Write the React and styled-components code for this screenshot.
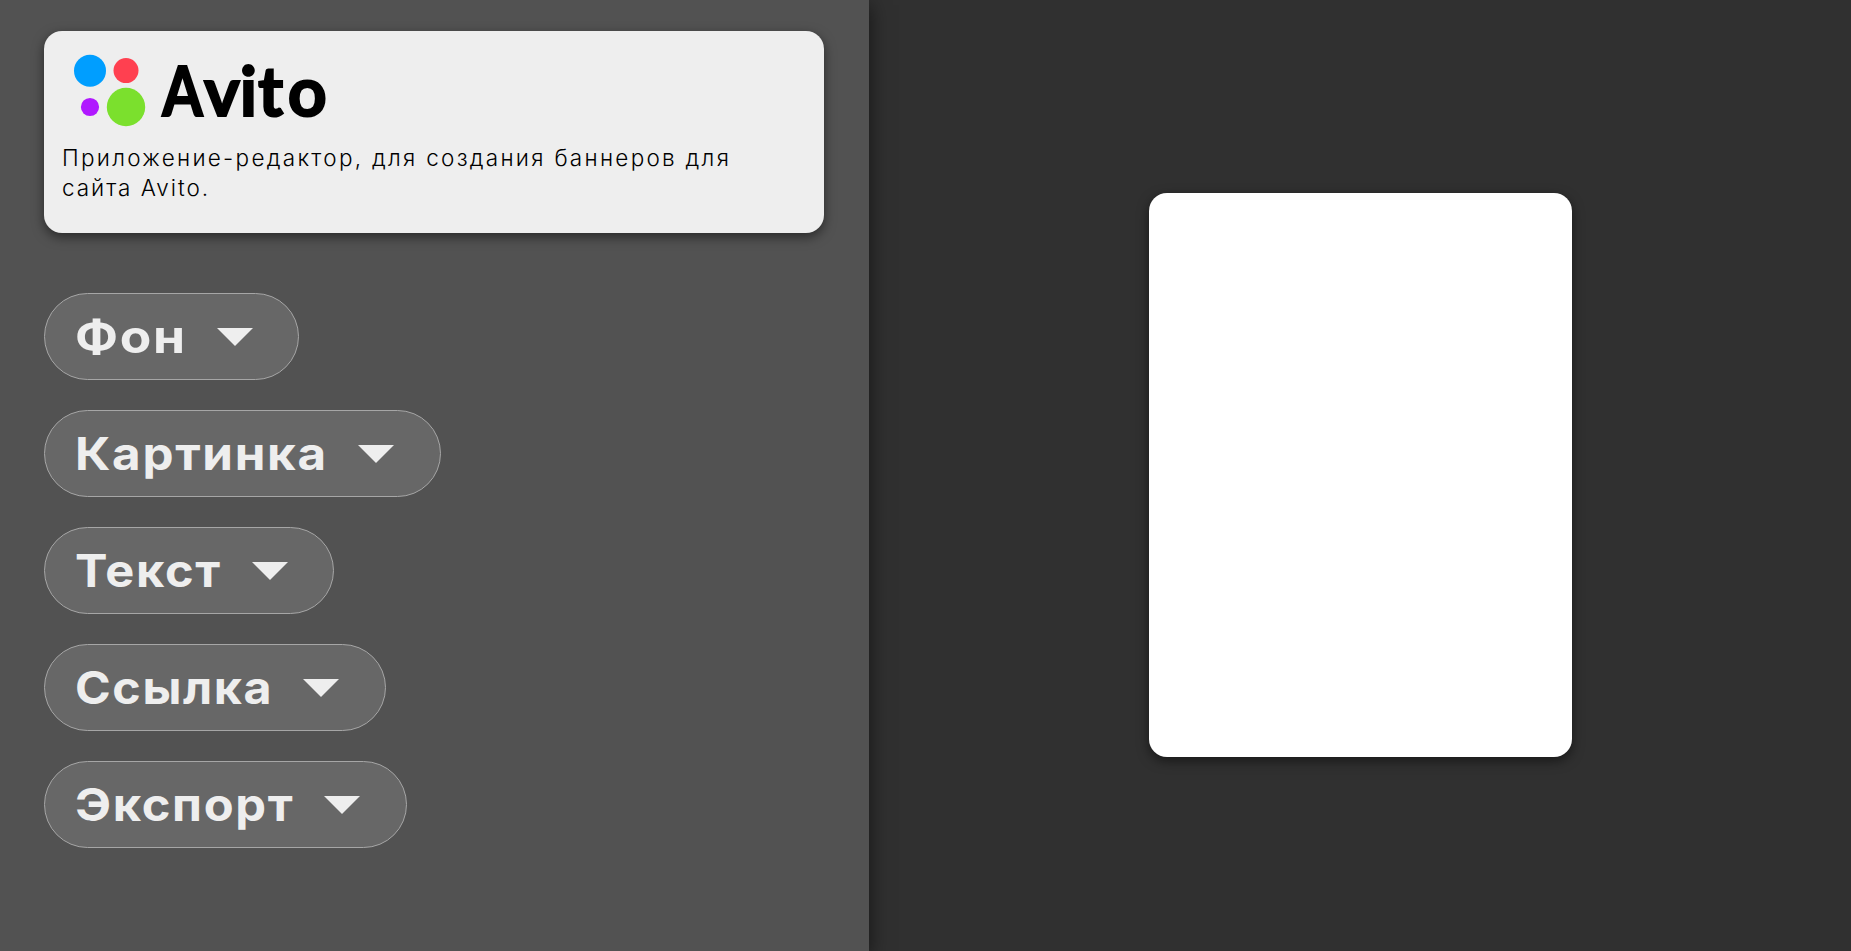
import React from 'react';
import styled, { createGlobalStyle } from 'styled-components';

const GlobalStyle = createGlobalStyle`
  * { box-sizing: border-box; }
  body {
    margin: 0;
    background: #303030;
    font-family: Inter, "Open Sans", sans-serif;
  }
`;

const Page = styled.div`
  display: flex;
  height: 100vh;
  overflow: hidden;
`;

const Sidebar = styled.aside`
  flex: 0 0 869px;
  padding: 31px 45px 0 44px;
  background: #525252;
  box-shadow: 0 5px 20px rgba(0, 0, 0, 0.6);
  z-index: 1;
`;

const Intro = styled.header`
  height: 202px;
  padding: 5px 18px 0;
  border-radius: 18px;
  background: #eee;
  box-shadow: 0 4px 12px rgba(0, 0, 0, 0.5);
`;

const Logo = styled.svg`
  display: block;
  width: 280px;
  height: 105px;
  overflow: visible;
  font-family: Lato, sans-serif;
  font-size: 68px;
  font-weight: 700;
`;

const Description = styled.p`
  margin: 2px 0 0;
  color: #000;
  font-size: 22.5px;
  font-weight: 300;
  line-height: 30px;
`;

const Line = styled.span`
  display: block;
  white-space: nowrap;
  letter-spacing: ${(p) => p.$spacing}px;
`;

const Menu = styled.nav`
  display: flex;
  flex-direction: column;
  align-items: flex-start;
  gap: 30px;
  margin-top: 60px;
`;

const MenuButton = styled.button`
  display: flex;
  align-items: center;
  justify-content: space-between;
  width: ${(p) => p.$width}px;
  height: 87px;
  padding: 0 ${(p) => p.$inset}px 0 30px;
  border: 1px solid #a6a6a6;
  border-radius: 45px;
  background: #676767;
  color: #eee;
  font: 700 45px/1 Inter, "Open Sans", sans-serif;
  letter-spacing: 1.5px;
  white-space: nowrap;
`;

const Label = styled.span`
  transform: scaleX(${(p) => p.$stretch});
  transform-origin: left center;
`;

const Arrow = styled.span`
  flex: none;
  border: 18px solid transparent;
  border-top-color: #eee;
  border-bottom: 0;
`;

const Workspace = styled.main`
  flex: 1;
  display: flex;
  align-items: center;
  justify-content: center;
  padding-bottom: 1px;
`;

const Banner = styled.div`
  width: 423px;
  height: 564px;
  border-radius: 18px;
  background: #fff;
  box-shadow: 0 4px 12px rgba(0, 0, 0, 0.5);
`;

const sections = [
  { label: 'Фон', width: 255, inset: 45, stretch: 1.145 },
  { label: 'Картинка', width: 397, inset: 46, stretch: 1.096 },
  { label: 'Текст', width: 290, inset: 45, stretch: 1.083 },
  { label: 'Ссылка', width: 342, inset: 46, stretch: 1.074 },
  { label: 'Экспорт', width: 363, inset: 46, stretch: 1.085 },
];

export default function App() {
  return (
    <Page>
      <GlobalStyle />
      <Sidebar>
        <Intro>
          <Logo viewBox="62 36 280 105" role="img" aria-label="Avito">
            <circle cx="90" cy="70.8" r="16" fill="#009eff" />
            <circle cx="126" cy="70.6" r="12.5" fill="#ff4050" />
            <circle cx="90" cy="107" r="9.1" fill="#b018ff" />
            <circle cx="126" cy="107" r="19.2" fill="#7be02d" />
            <g stroke="#000" strokeWidth="2">
              <text x="162.3" y="115.6" textLength="40.5" lengthAdjust="spacingAndGlyphs">A</text>
              <text x="204 239.8 258 287.7" y="115.6">vito</text>
            </g>
          </Logo>
          <Description>
            <Line $spacing={2.28}>Приложение-редактор, для создания баннеров для</Line>
            <Line $spacing={1.95}>сайта Avito.</Line>
          </Description>
        </Intro>
        <Menu>
          {sections.map((s) => (
            <MenuButton key={s.label} type="button" $width={s.width} $inset={s.inset}>
              <Label $stretch={s.stretch}>{s.label}</Label>
              <Arrow />
            </MenuButton>
          ))}
        </Menu>
      </Sidebar>
      <Workspace>
        <Banner />
      </Workspace>
    </Page>
  );
}
